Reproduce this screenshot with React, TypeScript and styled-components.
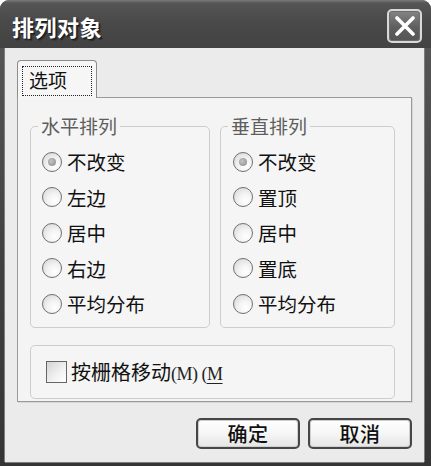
import React from "react";
import styled, { createGlobalStyle } from "styled-components";

const GlobalStyle = createGlobalStyle`
  html, body { margin: 0; padding: 0; background: #ffffff; }
  body { font-family: "Noto Sans CJK SC", "Noto Sans", sans-serif; }
  * { box-sizing: border-box; }
`;

const Window = styled.div`
  width: 431px;
  height: 466px;
  display: flex;
  flex-direction: column;
  background: linear-gradient(#5a5a5a, #3f3f3f 60%, #353535);
  border-radius: 9px 9px 0 0;
  padding-bottom: 6px;
  overflow: hidden;
`;

const TitleBar = styled.div`
  height: 48px;
  flex: none;
  display: flex;
  align-items: center;
  justify-content: space-between;
  padding: 4px 9px 0 12px;
  background: linear-gradient(#7a7a7a 0px, #555 3px, #4a4a4a 20px, #424242 100%);
`;

const Title = styled.div`
  color: #ffffff;
  font-size: 22px;
  font-weight: 700;
  letter-spacing: 0.5px;
  text-shadow: 1px 1px 0 #1e1e1e, 2px 2px 1px #2a2a2a;
  line-height: 26px;
`;

const CloseButton = styled.div`
  width: 35px;
  height: 34px;
  border: 2px solid #d8d8d8;
  border-radius: 5px;
  background: linear-gradient(#858585, #5e5e5e 55%, #555);
  display: flex;
  align-items: center;
  justify-content: center;
  box-shadow: inset 0 0 0 1px #6c6c6c;
`;

const Body = styled.div`
  flex: 1;
  margin: 0 7px 0 5px;
  background: #ebebeb;
  box-shadow: -1px 0 0 #7d7d7d, 1px 0 0 #7d7d7d, 0 1px 0 #7d7d7d;
  padding: 12px 12px 13px 12px;
  display: flex;
  flex-direction: column;
`;

const TabStrip = styled.div`
  height: 37px;
  display: flex;
  align-items: flex-end;
`;

const Tab = styled.div`
  position: relative;
  z-index: 1;
  width: 80px;
  height: 38px;
  margin-bottom: -1px;
  border: 1px solid #8c8c8c;
  border-bottom: none;
  border-radius: 4px 4px 0 0;
  background: #f6f6f6;
  padding: 5px 4px 2px 4px;
`;

const TabLabel = styled.div`
  height: 30px;
  border: 1px dotted #222;
  font-size: 19px;
  line-height: 26px;
  padding-left: 6px;
  color: #111;
`;

const Panel = styled.div`
  border: 1px solid #9a9a9a;
  background: #f4f4f4;
  padding: 17px 14px 2px 12px;
  box-shadow: 1px 1px 0 #d6d6d6;
`;

const GroupsRow = styled.div`
  display: flex;
  gap: 10px;
`;

const Group = styled.fieldset<{ $w: number }>`
  width: ${(p) => p.$w}px;
  margin: 0;
  padding: 7px 0 5px 0;
  border: 1px solid #cdcdcd;
  border-radius: 5px;
  background: #f5f5f5;
  min-width: 0;
`;

const Legend = styled.legend`
  margin-left: 7px;
  padding: 0 3px;
  font-size: 19px;
  line-height: 22px;
  color: #5e5e5e;
`;

const Row = styled.div<{ $pad: number }>`
  height: 35.5px;
  display: flex;
  align-items: center;
  gap: 5px;
  padding-left: ${(p) => p.$pad}px;
  font-size: 19.5px;
  color: #111;
`;

const Radio = styled.span<{ $checked?: boolean }>`
  width: 20px;
  height: 20px;
  flex: none;
  border-radius: 50%;
  border: 1.5px solid #6f6f6f;
  background: radial-gradient(circle at 65% 70%, #ffffff 0%, #f3f3f3 40%, #d2d2d2 100%);
  display: flex;
  align-items: center;
  justify-content: center;
  &::after {
    content: "";
    display: ${(p) => (p.$checked ? "block" : "none")};
    width: 8px;
    height: 8px;
    border-radius: 50%;
    background: radial-gradient(circle at 40% 40%, #c4c4c4, #8a8a8a);
  }
`;

const CheckGroup = styled.div`
  margin-top: 17px;
  width: 365px;
  height: 54px;
  border: 1px solid #cdcdcd;
  border-radius: 5px;
  background: #f5f5f5;
  display: flex;
  align-items: center;
  gap: 4px;
  padding-left: 15px;
`;

const CheckBox = styled.span`
  width: 21px;
  height: 22px;
  flex: none;
  border: 1.5px solid #666;
  background: linear-gradient(135deg, #d4d4d4, #f2f2f2 60%, #ffffff);
`;

const CheckText = styled.span`
  font-size: 20px;
  color: #111;
  display: flex;
  align-items: baseline;
`;

const Mnemonic = styled.span`
  font-family: "Liberation Serif", serif;
  font-size: 18px;
  color: #222;
  letter-spacing: -0.5px;
`;

const Underlined = styled.span`
  text-decoration: underline;
  text-underline-offset: 3px;
`;

const ButtonRow = styled.div`
  margin-top: 16px;
  display: flex;
  justify-content: flex-end;
  gap: 8px;
`;

const DialogButton = styled.div`
  width: 104px;
  height: 31px;
  border: 2px solid #464646;
  border-radius: 5px;
  background: linear-gradient(#ffffff, #f6f6f6 50%, #e4e4e4);
  box-shadow: inset 0 0 0 1px #d0d0d0;
  display: flex;
  align-items: center;
  justify-content: center;
  font-size: 20px;
  color: #111;
  font-weight: 500;
  letter-spacing: 0.5px;
`;

const CloseIcon = () => (
  <svg width="22" height="20" viewBox="0 0 22 20">
    <path d="M3 2 L19 18 M19 2 L3 18" stroke="#ffffff" strokeWidth="3.6" strokeLinecap="round" />
  </svg>
);

const horizontal = ["不改变", "左边", "居中", "右边", "平均分布"];
const vertical = ["不改变", "置顶", "居中", "置底", "平均分布"];

export default function App() {
  return (
    <>
      <GlobalStyle />
      <Window>
        <TitleBar>
          <Title>排列对象</Title>
          <CloseButton>
            <CloseIcon />
          </CloseButton>
        </TitleBar>
        <Body>
          <TabStrip>
            <Tab>
              <TabLabel>选项</TabLabel>
            </Tab>
          </TabStrip>
          <Panel>
            <GroupsRow>
              <Group $w={180}>
                <Legend>水平排列</Legend>
                {horizontal.map((t, i) => (
                  <Row key={t} $pad={11}>
                    <Radio $checked={i === 0} />
                    <span>{t}</span>
                  </Row>
                ))}
              </Group>
              <Group $w={175}>
                <Legend>垂直排列</Legend>
                {vertical.map((t, i) => (
                  <Row key={t} $pad={12}>
                    <Radio $checked={i === 0} />
                    <span>{t}</span>
                  </Row>
                ))}
              </Group>
            </GroupsRow>
            <CheckGroup>
              <CheckBox />
              <CheckText>
                按栅格移动
                <Mnemonic>
                  (M)&nbsp;(<Underlined>M</Underlined>
                </Mnemonic>
              </CheckText>
            </CheckGroup>
          </Panel>
          <ButtonRow>
            <DialogButton>确定</DialogButton>
            <DialogButton>取消</DialogButton>
          </ButtonRow>
        </Body>
      </Window>
    </>
  );
}
